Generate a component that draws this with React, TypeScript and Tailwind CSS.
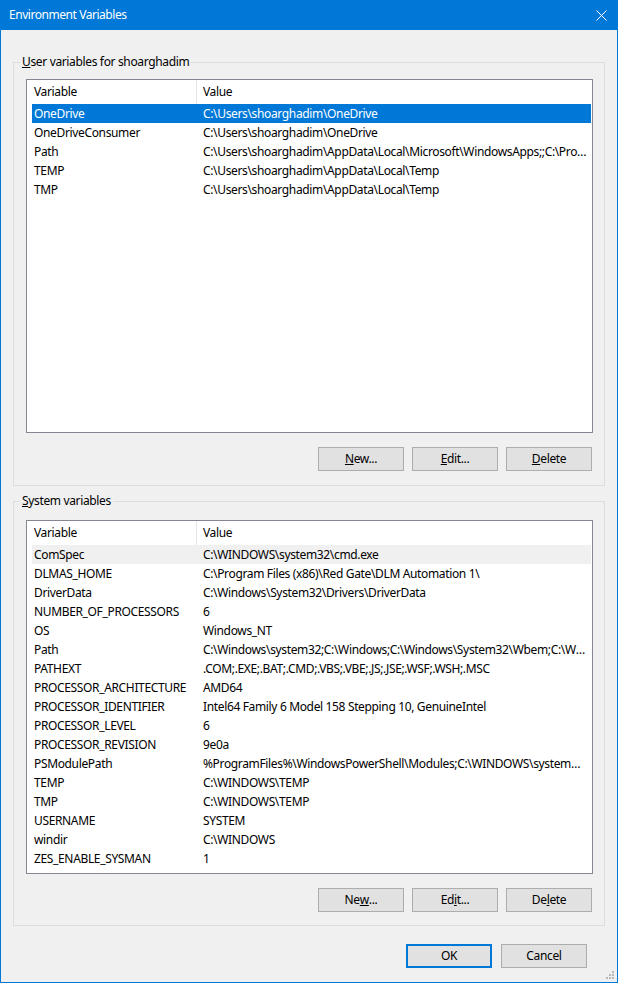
import React from 'react'

type Row = [string, string]

const userVars: Row[] = [
  ['OneDrive', 'C:\\Users\\shoarghadim\\OneDrive'],
  ['OneDriveConsumer', 'C:\\Users\\shoarghadim\\OneDrive'],
  ['Path', 'C:\\Users\\shoarghadim\\AppData\\Local\\Microsoft\\WindowsApps;;C:\\Program Files\\dotnet'],
  ['TEMP', 'C:\\Users\\shoarghadim\\AppData\\Local\\Temp'],
  ['TMP', 'C:\\Users\\shoarghadim\\AppData\\Local\\Temp'],
]

const systemVars: Row[] = [
  ['ComSpec', 'C:\\WINDOWS\\system32\\cmd.exe'],
  ['DLMAS_HOME', 'C:\\Program Files (x86)\\Red Gate\\DLM Automation 1\\'],
  ['DriverData', 'C:\\Windows\\System32\\Drivers\\DriverData'],
  ['NUMBER_OF_PROCESSORS', '6'],
  ['OS', 'Windows_NT'],
  ['Path', 'C:\\Windows\\system32;C:\\Windows;C:\\Windows\\System32\\Wbem;C:\\Windows\\System32'],
  ['PATHEXT', '.COM;.EXE;.BAT;.CMD;.VBS;.VBE;.JS;.JSE;.WSF;.WSH;.MSC'],
  ['PROCESSOR_ARCHITECTURE', 'AMD64'],
  ['PROCESSOR_IDENTIFIER', 'Intel64 Family 6 Model 158 Stepping 10, GenuineIntel'],
  ['PROCESSOR_LEVEL', '6'],
  ['PROCESSOR_REVISION', '9e0a'],
  ['PSModulePath', '%ProgramFiles%\\WindowsPowerShell\\Modules;C:\\WINDOWS\\system32\\WindowsPowerShell'],
  ['TEMP', 'C:\\WINDOWS\\TEMP'],
  ['TMP', 'C:\\WINDOWS\\TEMP'],
  ['USERNAME', 'SYSTEM'],
  ['windir', 'C:\\WINDOWS'],
  ['ZES_ENABLE_SYSMAN', '1'],
]

function VarList({ rows, selected }: { rows: Row[]; selected: 'focus' | 'dim' }) {
  return (
    <div className="h-[354px] border border-[#828790] bg-white overflow-hidden">
      {/* Column header */}
      <div className="flex h-[24px] items-center">
        <div className="w-[169px] pl-[7px]">Variable</div>
        <div className="h-full w-px bg-[#e5e5e5]" />
        <div className="pl-[6px]">Value</div>
      </div>
      {rows.map(([name, value], i) => {
        const cls =
          i === 0
            ? selected === 'focus'
              ? 'bg-[#0078d7] text-white'
              : 'bg-[#f0f0f0]'
            : ''
        return (
          <div key={name + i} className={`ml-[5px] mr-[1px] flex h-[19px] items-center ${cls}`}>
            <div className="w-[165px] shrink-0 pl-[2px] whitespace-nowrap">{name}</div>
            <div className="min-w-0 flex-1 truncate pl-[6px] pr-[4px]">{value}</div>
          </div>
        )
      })}
    </div>
  )
}

function Btn({ children, primary }: { children: React.ReactNode; primary?: boolean }) {
  return (
    <button
      className={`flex h-[24px] w-[86px] items-center justify-center bg-[#e1e1e1] ${
        primary ? 'border-2 border-[#0078d7]' : 'border border-[#adadad]'
      }`}
    >
      {children}
    </button>
  )
}

function Group({
  label,
  children,
  className,
}: {
  label: React.ReactNode
  children: React.ReactNode
  className?: string
}) {
  return (
    <div className={`relative w-[592px] border border-[#dcdcdc] pl-[12px] pr-[11px] ${className ?? ''}`}>
      <div className="absolute left-[6px] top-[-9px] bg-[#f0f0f0] px-[2px] leading-[16px]">{label}</div>
      {children}
    </div>
  )
}

export default function App() {
  return (
    <div className="relative flex h-[983px] w-[618px] flex-col bg-[#0078d7] font-['Noto_Sans',sans-serif] text-[12px] tracking-[-0.35px] text-black">
      {/* Title bar */}
      <div className="flex h-[30px] shrink-0 items-center justify-between pl-[9px] pr-[10px] text-white">
        <span className="tracking-[-0.45px]">Environment Variables</span>
        <svg width="11" height="11" viewBox="0 0 11 11" className="mr-[1px]">
          <path d="M0.5 0.5 L10.5 10.5 M10.5 0.5 L0.5 10.5" stroke="white" strokeWidth="1" />
        </svg>
      </div>

      {/* Dialog body */}
      <div className="relative mx-[1px] mb-[1px] flex-1 bg-[#f0f0f0] pl-[12px] pt-[32px]">
        <Group
          className="pt-[16px] pb-[14px]"
          label={
            <>
              <u>U</u>ser variables for shoarghadim
            </>
          }
        >
          <VarList rows={userVars} selected="focus" />
          <div className="mt-[14px] flex justify-end gap-[8px] pr-[1px]">
            <Btn>
              <u>N</u>ew...
            </Btn>
            <Btn>
              <u>E</u>dit...
            </Btn>
            <Btn>
              <u>D</u>elete
            </Btn>
          </div>
        </Group>

        <Group
          className="mt-[15px] pt-[18px] pb-[13px]"
          label={
            <>
              <u>S</u>ystem variables
            </>
          }
        >
          <VarList rows={systemVars} selected="dim" />
          <div className="mt-[14px] flex justify-end gap-[8px] pr-[1px]">
            <Btn>
              Ne<u>w</u>...
            </Btn>
            <Btn>
              Ed<u>i</u>t...
            </Btn>
            <Btn>
              De<u>l</u>ete
            </Btn>
          </div>
        </Group>

        <div className="mt-[18px] flex justify-end gap-[9px] pr-[30px]">
          <Btn primary>OK</Btn>
          <Btn>Cancel</Btn>
        </div>

        {/* Size grip */}
        <svg width="10" height="10" viewBox="0 0 10 10" className="absolute bottom-[2px] right-[2px]">
          <g fill="#b8b8b8">
            <rect x="7" y="1" width="2" height="2" />
            <rect x="4" y="4" width="2" height="2" />
            <rect x="7" y="4" width="2" height="2" />
            <rect x="1" y="7" width="2" height="2" />
            <rect x="4" y="7" width="2" height="2" />
            <rect x="7" y="7" width="2" height="2" />
          </g>
        </svg>
      </div>
    </div>
  )
}
